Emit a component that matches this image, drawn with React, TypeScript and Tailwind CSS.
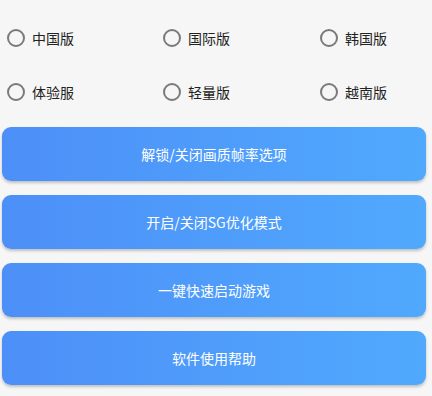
import React from 'react'

const versions = ['中国版', '国际版', '韩国版', '体验服', '轻量版', '越南版']

const actions = ['解锁/关闭画质帧率选项', '开启/关闭SG优化模式', '一键快速启动游戏', '软件使用帮助']

export default function App() {
  return (
    <div
      className="w-[432px] h-[396px] bg-[#f6f6f6] overflow-hidden"
      style={{ fontFamily: '"Noto Sans CJK SC", Roboto, sans-serif' }}
    >
      {/* Version radios */}
      <div className="grid grid-cols-[156px_157px_1fr] pl-[7px] pt-[11px]">
        {versions.map((v) => (
          <label key={v} className="flex items-center h-[54px] gap-[7px]">
            <span className="w-[18px] h-[18px] rounded-full border-2 border-[#7a7a7a] box-border" />
            <span className="text-[14px] text-[#222] leading-none">{v}</span>
          </label>
        ))}
      </div>

      {/* Action buttons */}
      <div className="flex flex-col gap-[14px] mt-[8px] ml-[2px] w-[424px]">
        {actions.map((a) => (
          <button
            key={a}
            className="h-[54px] w-full rounded-[9px] bg-gradient-to-r from-[#4d8ff8] to-[#50a9fd] text-white text-[14px] shadow-[0_2px_3px_rgba(0,0,0,0.22)]"
          >
            {a}
          </button>
        ))}
      </div>
    </div>
  )
}
